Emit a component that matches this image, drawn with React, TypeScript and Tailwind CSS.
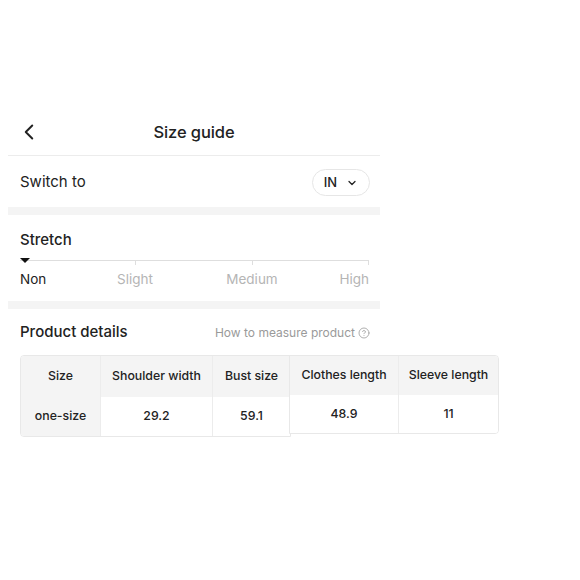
import { ChevronLeft, ChevronDown, CircleHelp } from "lucide-react";

const leftCols = [
  { head: "Size", value: "one-size", w: "w-[79px]", gray: true },
  { head: "Shoulder width", value: "29.2", w: "w-[112px]", gray: false },
  { head: "Bust size", value: "59.1", w: "w-[78px]", gray: false },
];

const rightCols = [
  { head: "Clothes length", value: "48.9", w: "w-[108px]" },
  { head: "Sleeve length", value: "11", w: "w-[100px]" },
];

export default function App() {
  return (
    <div
      className="w-[580px] h-[580px] bg-white text-[#222] pt-[109px]"
      style={{ fontFamily: "Inter, 'Noto Sans', sans-serif" }}
    >
      <div className="ml-[8px] w-[372px]">
        {/* Header */}
        <div className="relative h-[47px] flex items-center justify-center border-b border-[#ececec]">
          <ChevronLeft className="absolute left-[8px] w-[26px] h-[26px] text-[#222]" strokeWidth={1.8} />
          <span className="text-[16.5px] font-medium tracking-[-0.1px]">Size guide</span>
        </div>

        {/* Switch to */}
        <div className="h-[51px] flex items-center justify-between pl-[12px] pr-[10px] pt-[2px]">
          <span className="text-[15px]">Switch to</span>
          <div className="h-[27px] w-[58px] rounded-full border border-[#e6e6e6] flex items-center justify-center gap-[9px]">
            <span className="text-[13px] font-medium">IN</span>
            <ChevronDown className="w-[12px] h-[12px]" strokeWidth={2.5} />
          </div>
        </div>
        <div className="h-[8px] bg-[#f4f4f4]" />

        {/* Stretch */}
        <div className="h-[86px] px-[12px] pt-[15px]">
          <div className="text-[15px] font-medium leading-[20px]">Stretch</div>
          <div className="relative mt-[10px] mr-[-1px] h-[5px] border-t border-[#dedede]">
            <div className="absolute left-[115px] top-0 w-px h-[4px] bg-[#dedede]" />
            <div className="absolute left-[232px] top-0 w-px h-[4px] bg-[#dedede]" />
            <div className="absolute right-0 top-0 w-px h-[4px] bg-[#dedede]" />
            <div className="absolute left-0 top-[-3px] w-0 h-0 border-l-[5px] border-r-[5px] border-t-[5px] border-l-transparent border-r-transparent border-t-[#111]" />
          </div>
          <div className="relative h-[18px] mt-[5px] mr-[-1px] text-[13.5px] leading-[18px]">
            <span className="absolute left-0 text-[#222]">Non</span>
            <span className="absolute left-[115px] -translate-x-1/2 text-[#b5b5b5]">Slight</span>
            <span className="absolute left-[232px] -translate-x-1/2 text-[#b5b5b5]">Medium</span>
            <span className="absolute right-0 text-[#b5b5b5]">High</span>
          </div>
        </div>
        <div className="h-[8px] bg-[#f4f4f4]" />

        {/* Product details */}
        <div className="h-[46px] flex items-center justify-between pl-[12px] pr-[10px] pt-[1px]">
          <span className="text-[15px] font-medium">Product details</span>
          <span className="flex items-center gap-[3px] text-[12px] text-[#9a9a9a]">
            How to measure product
            <CircleHelp className="w-[12px] h-[12px]" strokeWidth={1.6} />
          </span>
        </div>
      </div>

      {/* Table */}
      <div className="ml-[20px] flex items-start text-[12.3px] font-medium">
        <div className="flex rounded-l-[4px] border border-[#e8e8e8] overflow-hidden">
          {leftCols.map((c, i) => (
            <div key={c.head} className={`${c.w} flex flex-col ${i > 0 ? "border-l border-[#ececec]" : ""}`}>
              <div className="h-[41px] bg-[#f4f4f4] flex items-center justify-center">{c.head}</div>
              <div
                className={`h-[39px] flex items-center justify-center ${c.gray ? "bg-[#f4f4f4]" : "bg-white"}`}
              >
                {c.value}
              </div>
            </div>
          ))}
        </div>
        <div className="flex -ml-[2px] rounded-r-[4px] border border-[#e8e8e8] overflow-hidden">
          {rightCols.map((c, i) => (
            <div key={c.head} className={`${c.w} flex flex-col ${i > 0 ? "border-l border-[#ececec]" : ""}`}>
              <div className="h-[39px] bg-[#f4f4f4] flex items-center justify-center">{c.head}</div>
              <div className="h-[38px] bg-white flex items-center justify-center">{c.value}</div>
            </div>
          ))}
        </div>
      </div>
    </div>
  );
}
